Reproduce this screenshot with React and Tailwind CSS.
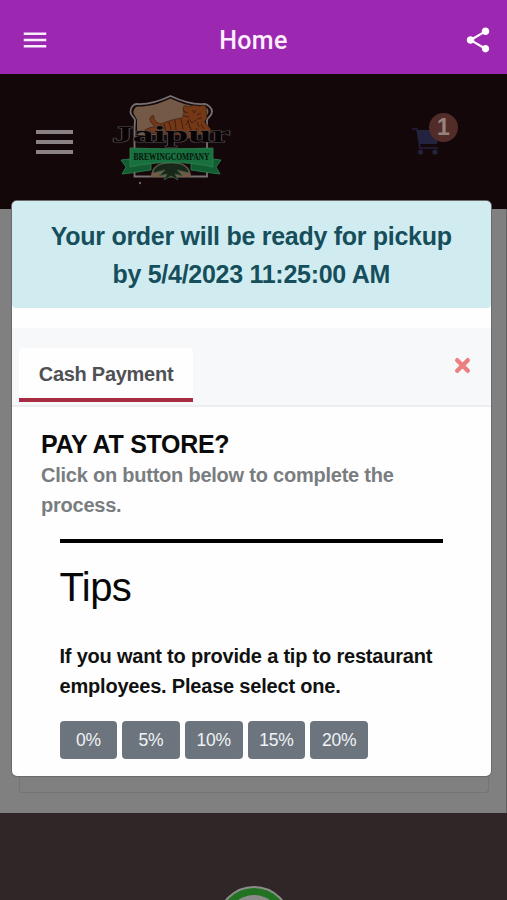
import { MdMenu, MdShare } from "react-icons/md";

const tips = ["0%", "5%", "10%", "15%", "20%"];

function AppBar() {
  return (
    <header className="flex h-[74px] shrink-0 items-center justify-between bg-[#9c27b0] pt-[5px] pr-[14px] pl-[20px] font-['Roboto',sans-serif] text-[#fdeeff]">
      <MdMenu size={30} />
      <h1 className="mr-[6px] pt-[2px] text-[25px] leading-[30px] font-medium tracking-[0.4px]">Home</h1>
      <MdShare size={30} className="text-white" />
    </header>
  );
}

function Logo() {
  return (
    <svg width="124" height="96" viewBox="0 0 124 96" className="ml-[36px]">
      <path
        d="M25.5 87.5V40l.5-9c-1-4-5-4-4.500-8.500 0-4 3-7.500 6-7.500 10 1 19-1 34-8 15 7 24 9 34 8 3 0 7.500 4 7.500 7.500 0 5-4 5-5 8.500V87.500Z"
        fill="#14080a"
        stroke="#777172"
        strokeWidth="1.8"
      />
      <path
        d="M28 46V31c-1-4-4-5-3.500-8.500.5-3 2-5 5-5 11 0 19-2 32-8 13 6 22 8 32 8 3 0 6 2 6 5S96 28 96 31v15Z"
        fill="#745a46"
      />
      <path
        d="M36 41c3-2 7-3 10-3-3-4-6-6-5-9 1-2 3-3 4-2-1 4 3 7 7 8 7-3 13-5 21-6l2-5-1-5c1-3 3-3 5-1 4-2 8-2 12-1 4-2 7 0 6 4l1 8c-1 2-2 3-3 4 4 3 8 7 7 11l-6 2-10-1-4 4c-5 1-9 0-12-3l-34-2Z"
        fill="#743816"
        stroke="#291510"
        strokeWidth="0.6"
      />
      <path
        d="m50 37 2 6m3-8 2 7m3-9 2 8m4-10 1 10m5-11 2 10m5-9 2 8m-7-17 5 2m-4 3 5 1m3-7 2 3 2-3m5 3-4 2m5 3-5 1m-8 0 3 4 4-3m-8 1-2 4m11-3 2 5m2-3 3 5m-14-2 2 5m4-4 2 4"
        fill="none"
        stroke="#3a1c10"
        strokeWidth="0.9"
      />
      <text
        x="62"
        y="53"
        textAnchor="middle"
        textLength="118"
        lengthAdjust="spacingAndGlyphs"
        fontFamily="'Liberation Serif', serif"
        fontWeight="700"
        fontSize="24"
        fill="#080304"
        stroke="#514b4c"
        strokeWidth="1.2"
        paintOrder="stroke"
      >
        Jaipur
      </text>
      <path d="M42 88c0-10 7-15 20-15s20 5 20 15Z" fill="#745a46" />
      <path
        d="M62 74c-12 0-17 4-18 10l12-3-6 6 8-2-3 6 7-4 7 4-3-6 8 2-6-6 12 3c-1-6-6-10-18-10Z"
        fill="#19271b"
        stroke="#396044"
        strokeWidth="0.8"
      />
      <path
        d="m21 70-9 1 5 7-4 7c11-1 20-3 29-4v-8Zm83 0 8 1-5 7 4 7c-11-1-20-3-29-4v-8Z"
        fill="#115d31"
        stroke="#328053"
        strokeWidth="0.8"
      />
      <path
        d="M21 59c28 1 55 1 83 0v19c-25-6-58-6-83 0Z"
        fill="#17703d"
        stroke="#328053"
        strokeWidth="0.8"
      />
      <text
        transform="translate(62.5 70.5) scale(1 1.4)"
        textAnchor="middle"
        textLength="76"
        lengthAdjust="spacingAndGlyphs"
        fontFamily="'Liberation Serif', serif"
        fontWeight="700"
        fontSize="7.4"
        fill="#07130c"
      >
        BREWINGCOMPANY
      </text>
      <circle cx="31" cy="94" r="1.2" fill="#676062" />
    </svg>
  );
}

function Cart() {
  return (
    <div className="relative ml-auto h-[46px] w-[46px]">
      <svg width="30" height="30" viewBox="0 0 30 30" className="absolute top-[14px] left-0">
        <path d="M0 2h5l3 19h18" fill="none" stroke="#23223f" strokeWidth="1.6" />
        <path d="M5 3h22l-2 14H8Z" fill="#23223f" />
        <circle cx="8.500" cy="25" r="2.600" fill="#23223f" />
        <circle cx="23" cy="25" r="2.600" fill="#23223f" />
      </svg>
      <span className="absolute top-0 right-0 flex h-[29px] w-[29px] items-center justify-center rounded-full bg-[#522c29] font-['Liberation_Sans',sans-serif] text-[23px] font-bold text-[#96827f]">
        1
      </span>
    </div>
  );
}

function SiteHeader() {
  return (
    <div className="flex h-[135px] shrink-0 items-start bg-[#140709] pr-[49px] pl-[36px]">
      <div className="mt-[56px] flex w-[37px] flex-col gap-[6px]">
        <span className="h-[4px] bg-[#8a8284]" />
        <span className="h-[4px] bg-[#8a8284]" />
        <span className="h-[4px] bg-[#8a8284]" />
      </div>
      <div className="mt-[15px]">
        <Logo />
      </div>
      <div className="mt-[39px] ml-auto">
        <Cart />
      </div>
    </div>
  );
}

function PaymentModal() {
  return (
    <div className="absolute top-[201px] left-[12px] flex h-[575px] w-[478.5px] flex-col overflow-hidden rounded-[5px] bg-[#fefefe] shadow-[0_0_0_1px_#6b6b6b]">
      <div className="h-[107px] shrink-0 rounded-[4px] bg-[#d1ecf1] pt-[17px] text-center text-[25px] leading-[37.5px] font-bold tracking-[-0.28px] whitespace-nowrap text-[#164f5b]">
        <p>Your order will be ready for pickup</p>
        <p>by 5/4/2023 11:25:00 AM</p>
      </div>
      <div className="mt-[20px] flex h-[79px] shrink-0 items-start justify-between border-b-2 border-[#ebedef] bg-[#f7f8fa] pr-[20px] pl-[7px]">
        <div className="mt-[20px] h-[54px] w-[174px] rounded-t-[4px] border-b-4 border-[#a72c42] bg-[#fefefe] pt-[11px] text-center text-[20px] leading-[30px] font-bold tracking-[-0.27px] text-[#505155]">
          Cash Payment
        </div>
        <svg width="17" height="17" viewBox="0 0 17 17" className="mt-[29px]">
          <path d="m3.200 3.200 10.600 10.600M13.800 3.200 3.200 13.800" stroke="#ec8080" strokeWidth="4.4" strokeLinecap="round" />
        </svg>
      </div>
      <div className="px-[29px] pt-[22px]">
        <h2 className="text-[25px] leading-[30px] font-bold tracking-[-0.3px] whitespace-nowrap text-[#0b0b0b]">
          PAY AT STORE?
        </h2>
        <div className="pt-px text-[20px] leading-[30px] font-bold tracking-[-0.23px] whitespace-nowrap text-[#797d80]">
          <p>Click on button below to complete the</p>
          <p>process.</p>
        </div>
        <div className="px-[18.5px]">
          <hr className="mt-[19px] h-[4px] w-[383px] border-0 bg-black" />
          <h3 className="mt-[20px] text-[40px] leading-[48px] tracking-[-0.6px] text-[#080808]">Tips</h3>
          <div className="mt-[30px] text-[20px] leading-[30px] font-bold tracking-[-0.2px] whitespace-nowrap text-[#111]">
            <p>If you want to provide a tip to restaurant</p>
            <p>employees. Please select one.</p>
          </div>
          <div className="mt-[20px] flex gap-[5px]">
            {tips.map((tip) => (
              <button
                key={tip}
                className="h-[38px] w-[57.7px] shrink-0 rounded-[4px] bg-[#6c757d] text-[17.5px] tracking-[-0.2px] text-[#f0f2f5]"
              >
                {tip}
              </button>
            ))}
          </div>
        </div>
      </div>
    </div>
  );
}

export default function App() {
  return (
    <div className="relative flex h-[900px] w-[507px] flex-col overflow-hidden bg-[#808080] font-['Liberation_Sans',Arial,sans-serif]">
      <AppBar />
      <SiteHeader />
      <main className="flex h-[604px] shrink-0 flex-col border-r border-[#606060] bg-[#808080] pr-[17px] pl-[19px]">
        <div className="h-[584px] rounded-b-[4px] border border-t-0 border-[#747474]" />
      </main>
      <footer className="flex h-[87px] shrink-0 justify-center overflow-hidden bg-[#302628] pt-[73px]">
        <div className="h-[74px] w-[74px] shrink-0 rounded-full border-2 border-[#8c8c8c] bg-[#217321] p-[7px]">
          <div className="h-full w-full rounded-full bg-[#8b8b8b]" />
        </div>
      </footer>
      <PaymentModal />
    </div>
  );
}
